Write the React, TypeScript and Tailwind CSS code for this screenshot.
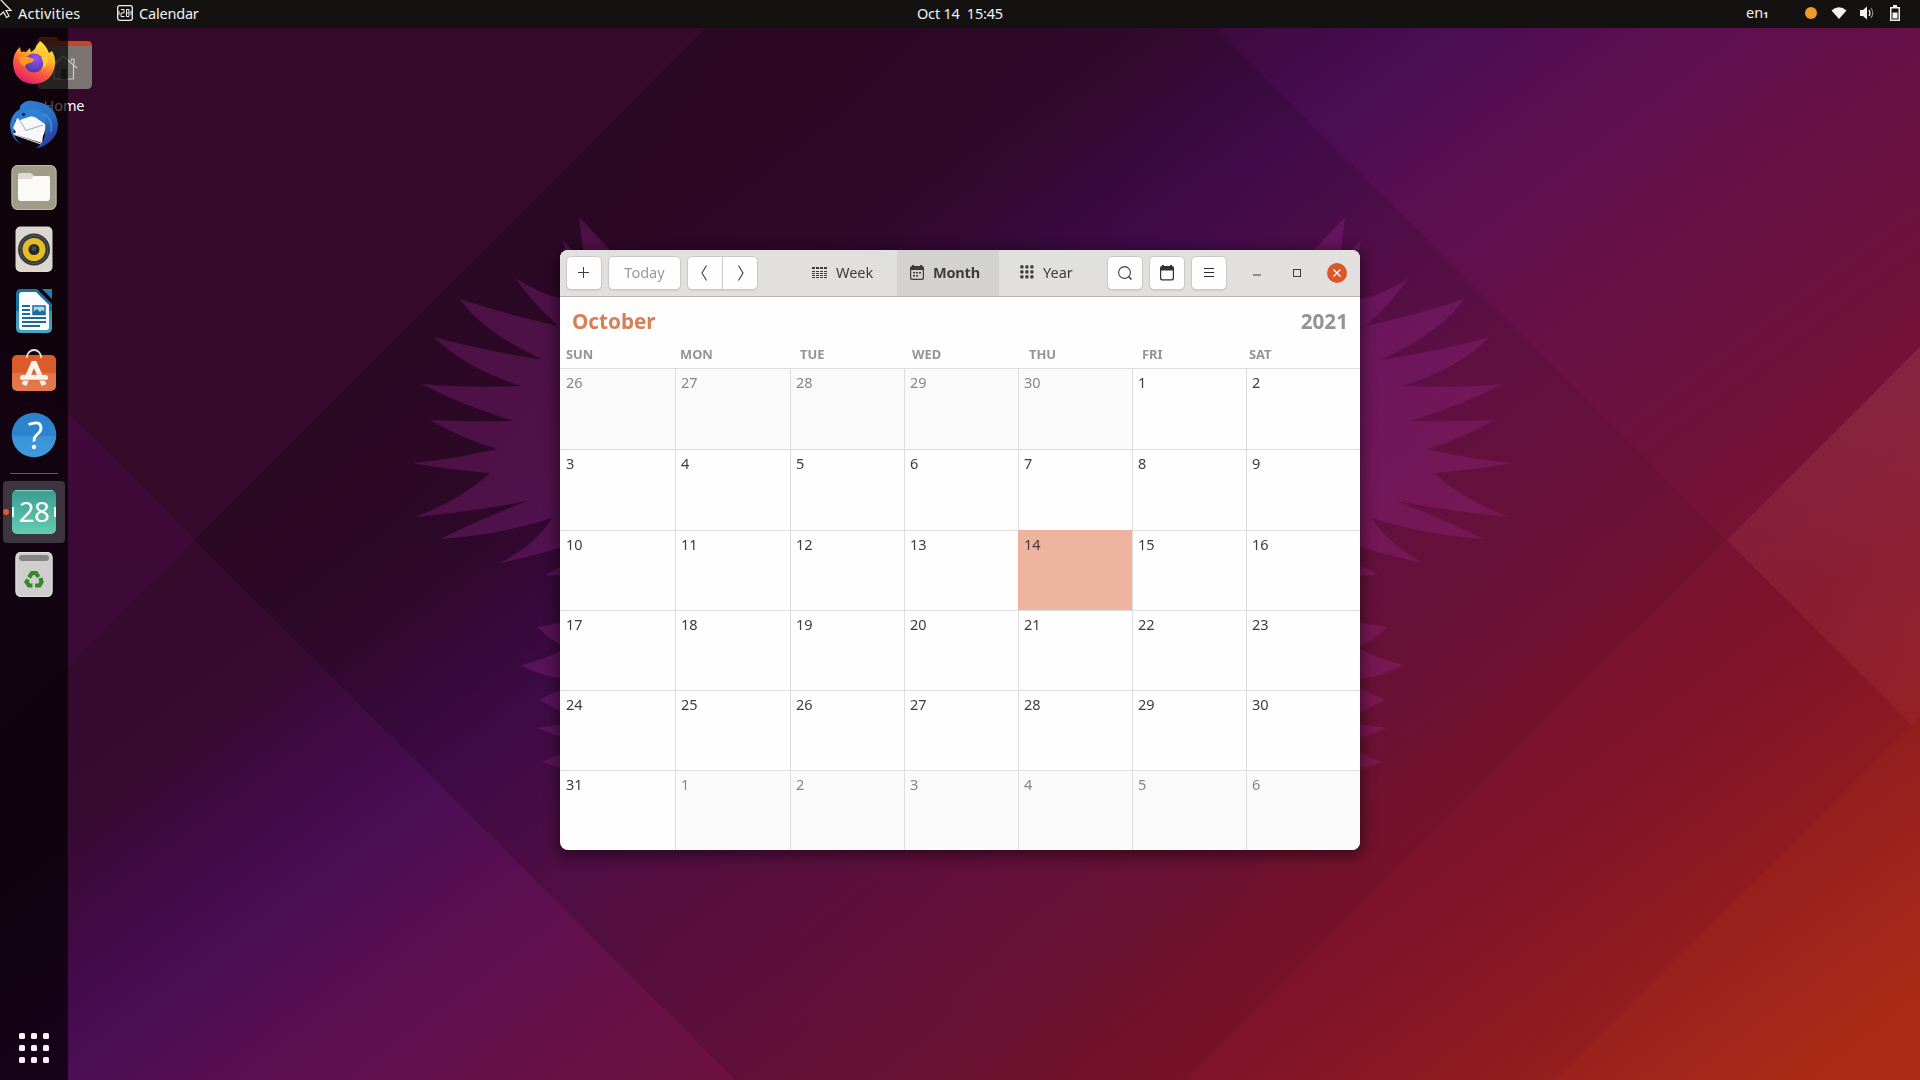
import React from "react";

const FONT = "font-['Noto_Sans','Open_Sans',sans-serif]";

const CROWN =
  "M610 250 L579 217 L583 250 Z M563 240 L574 252 L566 254 Z " +
  "M566 327 L558 326 Q535 305 515 278 Q540 294 566 300 Z " +
  "M566 328 Q505 314 460 299 Q480 330 543 360 Q485 351 434 337 Q465 368 521 386 Q465 388 422 384 Q460 404 513 421 Q470 422 430 420 Q460 438 497 449 Q450 460 412 463 Q450 470 490 473 Q460 500 415 517 Q470 512 528 501 Q490 515 440 539 Q500 535 552 518 Q535 545 500 563 Q535 556 566 546 Z " +
  "M545 575 L566 564 V576 Z M566 622 L537 627 Q548 638 566 648 Z M566 648 Q545 660 520 665 Q540 676 566 679 Z " +
  "M566 687 L539 700 L566 714 Z M566 724 L537 728 L566 739 Z M566 752 L542 762 L566 770 Z";

function Wallpaper() {
  return (
    <svg className="absolute inset-0" width="1920" height="1080" viewBox="0 0 1920 1080">
      <defs>
        <linearGradient id="wall" gradientUnits="userSpaceOnUse" x1="0" y1="0" x2="1170" y2="1564">
          <stop offset="0" stopColor="#360a2c" />
          <stop offset="0.25" stopColor="#350a2b" />
          <stop offset="0.36" stopColor="#370a32" />
          <stop offset="0.42" stopColor="#420b48" />
          <stop offset="0.455" stopColor="#4a0d53" />
          <stop offset="0.52" stopColor="#5a0f50" />
          <stop offset="0.62" stopColor="#691146" />
          <stop offset="0.7" stopColor="#70123a" />
          <stop offset="0.8" stopColor="#7d132a" />
          <stop offset="0.88" stopColor="#8d1921" />
          <stop offset="1" stopColor="#a62a18" />
        </linearGradient>
        <linearGradient id="diamond" gradientUnits="userSpaceOnUse" x1="450" y1="280" x2="1400" y2="900">
          <stop offset="0" stopColor="#000" stopOpacity="0.19" />
          <stop offset="0.6" stopColor="#000" stopOpacity="0.12" />
          <stop offset="1" stopColor="#000" stopOpacity="0.04" />
        </linearGradient>
        <linearGradient id="tri" x1="0" y1="0" x2="0" y2="1">
          <stop offset="0" stopColor="#470a42" stopOpacity="0.7" />
          <stop offset="1" stopColor="#3c0a3a" stopOpacity="0.6" />
        </linearGradient>
        <linearGradient id="square" gradientUnits="userSpaceOnUse" x1="1820" y1="400" x2="1750" y2="1000">
          <stop offset="0" stopColor="#ffa0a0" stopOpacity="0.12" />
          <stop offset="1" stopColor="#ff6040" stopOpacity="0.03" />
        </linearGradient>
      </defs>
      <rect width="1920" height="1080" fill="url(#wall)" />
      <path d="M706 28 L195 540 L735 1080 H1185 L1727 540 L1215 28 Z" fill="url(#diamond)" />
      <path d="M0 345 L195 540 L0 735 Z" fill="url(#tri)" />
      <path d="M1727 540 L1920 347 V716 L1911 724 Z" fill="url(#square)" />
      <path d="M1911 724 L1920 715 V1080 H1555 Z" fill="#ff5a10" opacity="0.05" />
      <g fill="#9e2a94" opacity="0.3">
        <path d={CROWN} />
        <path d={CROWN} transform="translate(1924 0) scale(-1 1)" />
      </g>
    </svg>
  );
}

function HomeIcon() {
  return (
    <div className="absolute left-[37px] top-[37px] w-[55px]">
      <svg width="55" height="52" viewBox="0 0 55 52" className="block">
        <path d="M0 5 Q0 0 4 0 H17 Q20 0 22 4 H51 Q55 4 55 9 V30 H0 Z" fill="#c4472a" />
        <path d="M0 9 H55 V47 Q55 52 50 52 H5 Q0 52 0 47 Z" fill="#7a7573" />
        <g fill="none" stroke="#cfcaca" strokeWidth="1.2">
          <path d="M14 31 L26 19 L40 31 M17 28 V42 H36.500 V27 M34.500 24 V22 H37 V27" />
        </g>
        <path d="M24 42 V32 H30 V42 Z" fill="#4a4545" />
      </svg>
      <div className="mt-[6px] w-[54px] text-center text-[14.500px] leading-5 tracking-[-0.1px] text-white">Home</div>
    </div>
  );
}

function Slot({ children }: { children: React.ReactNode }) {
  return (
    <svg width="62" height="62" viewBox="0 0 62 62" className="block shrink-0">
      {children}
    </svg>
  );
}

function Dock() {
  return (
    <aside className="relative flex w-[68px] flex-col items-center bg-black/70 pt-1">
      <Slot>
        <defs>
          <linearGradient id="ff" x1="0.8" y1="0" x2="0.3" y2="1">
            <stop offset="0" stopColor="#fff04a" />
            <stop offset="0.35" stopColor="#ffb628" />
            <stop offset="0.65" stopColor="#ff5a3c" />
            <stop offset="1" stopColor="#e01a70" />
          </linearGradient>
          <radialGradient id="ffg" cx="0.6" cy="0.25" r="0.8">
            <stop offset="0" stopColor="#9a52f0" />
            <stop offset="1" stopColor="#4b38a5" />
          </radialGradient>
        </defs>
        <path d="M37 9 Q43 13 46 21 L49 19 Q53 26 52 33 Q49 51 31 52 Q11 51 10 31 Q10 21 17 15 L18 20 Q20 19 23 20 L27 16 L28 20 Q33 17 33 14 Q35 12 37 9 Z" fill="url(#ff)" />
        <circle cx="31" cy="31" r="9.500" fill="url(#ffg)" />
        <path d="M16 25 Q22 23 31 27 Q31 30 26 31 Q22 32 22 35 Q16 32 16 25 Z" fill="#ff9a22" />
        <path d="M29 21 Q37 19 41 26 L38 25 Q42 32 39 37 Q46 33 45 25 Q42 16 34 17 Z" fill="#ffc93a" />
      </Slot>
      <Slot>
        <defs>
          <linearGradient id="tb" x1="0" y1="0" x2="1" y2="1">
            <stop offset="0" stopColor="#3484dc" />
            <stop offset="0.6" stopColor="#2a70c0" />
            <stop offset="1" stopColor="#2a2090" />
          </linearGradient>
        </defs>
        <path d="M17 12 Q22 6 30 7 Q50 9 54 25 Q58 40 44 50 Q38 54 33 54 Q43 48 42 36 L20 16 Q9 26 11 41 Q14 48 20 51 Q8 46 7 31 Q8 20 17 15 Z" fill="url(#tb)" />
        <path d="M14 24 Q22 20 32 23 L42 30 Q43 36 40 42 L39 49 L10 40 L13 38 L10 34 Z" fill="#f6f8fb" />
        <path d="M11 40.500 L38 50" stroke="#d9dde3" strokeWidth="1.200" />
        <path d="M16 25 L23 36.500 L40 31" fill="none" stroke="#a0a8b2" strokeWidth="1" />
        <path d="M15 21 Q22 10 36 16 Q44 22 42 30 Q36 23 29 22 Q19 25 17 26 Q14 25 15 21 Z" fill="#2f7fd2" />
        <path d="M40 20 Q50 24 48 38" fill="none" stroke="#4aa3e6" strokeWidth="2" opacity="0.6" />
        <circle cx="20.500" cy="20.500" r="1.800" fill="#0c2f5c" />
      </Slot>
      <Slot>
        <rect x="8.500" y="9" width="45" height="45" rx="6" fill="#a19c88" />
        <rect x="9" y="9.500" width="44" height="44" rx="6" fill="none" stroke="#bdb8a6" />
        <path d="M15 19 Q15 17 17 17 H27 Q29 17 31 20 H45 Q47 20 47 22 V28 H15 Z" fill="#dfdbd0" />
        <path d="M15 23 H28 L31 20 H45 Q47 20 47 22 V42 Q47 45 44 45 H18 Q15 45 15 42 Z" fill="#fbfaf6" />
      </Slot>
      <Slot>
        <rect x="12.500" y="8.500" width="37" height="45.500" rx="5" fill="#dcd8d0" />
        <circle cx="31" cy="31.500" r="16" fill="#33383b" />
        <circle cx="31" cy="31.500" r="14" fill="none" stroke="#5c6164" strokeWidth="0.800" />
        <circle cx="31" cy="31.500" r="11.500" fill="#e6bd25" />
        <circle cx="31" cy="31.500" r="5.500" fill="#23282a" />
        <circle cx="31" cy="30.500" r="2.500" fill="#454a4d" />
      </Slot>
      <Slot>
        <defs>
          <linearGradient id="wr" x1="0" y1="0" x2="0" y2="1">
            <stop offset="0.500" stopColor="#1b709f" />
            <stop offset="0.500" stopColor="#3a93bb" />
            <stop offset="1" stopColor="#4ba3c4" />
          </linearGradient>
        </defs>
        <path d="M18 9 H34 L49 24 V48 Q49 53 44 53 H18 Q13 53 13 48 V14 Q13 9 18 9 Z" fill="url(#wr)" />
        <path d="M39 9 H49 V19 Z" fill="#2480ac" />
        <path d="M19 12 H33 L46 25 V47 Q46 50 43 50 H19 Q16 50 16 47 V15 Q16 12 19 12 Z" fill="#fafcfd" />
        <path d="M19 26 H27 M19 30 H27 M19 34 H27 M19 38 H43 M19 42 H43 M19 46 H37" stroke="#1e6a96" strokeWidth="2" />
        <rect x="30" y="26" width="12" height="8.500" fill="#a9d8f0" stroke="#1e6a96" strokeWidth="1.500" />
        <path d="M30 34 V32 L34 29 L37 32 L39 30 L42 32 V34 Z" fill="#1e6a96" />
      </Slot>
      <Slot>
        <defs>
          <linearGradient id="sw" x1="0" y1="0" x2="0" y2="1">
            <stop offset="0.500" stopColor="#dc5b2a" />
            <stop offset="0.500" stopColor="#e17446" />
            <stop offset="1" stopColor="#e37a4e" />
          </linearGradient>
        </defs>
        <rect x="9" y="13" width="44" height="36" rx="5" fill="url(#sw)" />
        <path d="M24 16 V15 A7 7 0 0 1 38 15 V16" fill="none" stroke="#f3dfc6" strokeWidth="1.800" />
        <path d="M21 43 L31 20 L41 43" fill="none" stroke="#faf3ec" strokeWidth="5" strokeLinejoin="bevel" />
        <path d="M19.500 35.500 H42.500" stroke="#faf3ec" strokeWidth="5" strokeLinecap="round" />
        <path d="M20 38.200 H42" stroke="#d9683c" strokeWidth="0.800" />
      </Slot>
      <Slot>
        <defs>
          <linearGradient id="hp" x1="0" y1="0" x2="0" y2="1">
            <stop offset="0.530" stopColor="#2b84cd" />
            <stop offset="0.530" stopColor="#3b92d6" />
            <stop offset="1" stopColor="#419add" />
          </linearGradient>
        </defs>
        <circle cx="31" cy="31" r="22.300" fill="url(#hp)" />
        <path d="M25.500 20.500 Q38 16 38 24 Q38 27.500 34 30.500 Q30.500 33.500 31 37.500" fill="none" stroke="#fff" strokeWidth="2.800" />
        <circle cx="31" cy="43" r="2.200" fill="#fff" />
      </Slot>
      <div className="my-[7px] h-px w-12 shrink-0 bg-[#665b66]" />
      <div className="relative h-[62px] w-[62px] shrink-0 rounded-[4px] bg-[#3d353f]">
        <Slot>
          <defs>
            <linearGradient id="cal" x1="0" y1="0" x2="0" y2="1">
              <stop offset="0" stopColor="#3b9c91" />
              <stop offset="1" stopColor="#63cdb2" />
            </linearGradient>
          </defs>
          <rect x="9" y="9" width="44" height="44" rx="5" fill="url(#cal)" />
          <path d="M12 9.700 H50" stroke="#8fd6cb" strokeWidth="1" />
          <path d="M10 26 V36 M52 26 V36" stroke="#e9fbf6" strokeWidth="2" />
          <circle cx="3" cy="31" r="3" fill="#e25a2b" />
        </Slot>
        <span className="absolute inset-0 text-center font-['Noto_Sans',sans-serif] text-[27.500px] leading-[61px] tracking-[-0.5px] text-white">28</span>
      </div>
      <Slot>
        <rect x="12.500" y="9" width="37" height="45" rx="5" fill="#cfcecd" />
        <rect x="13" y="9.500" width="36" height="44" rx="5" fill="none" stroke="#e2e1e0" />
        <rect x="16" y="12" width="30" height="6" rx="3" fill="#848484" />
        <g fill="none" stroke="#34882a" strokeWidth="4.200">
          <path d="M26 34.500 L29 30 H33 L35.500 34" />
          <path d="M37.500 35 L38.500 39 L36.500 42.500 H32" />
          <path d="M29.500 42.500 H26 L23.500 39 L25 36.500" />
        </g>
      </Slot>
      <svg width="30" height="30" viewBox="0 0 30 30" className="mb-[17px] mt-auto block shrink-0" fill="#fdf0fb">
        {[0, 12, 24].map((y) => [0, 12, 24].map((x) => <rect key={x + "-" + y} x={x} y={y} width="6" height="6" rx="1.500" />))}
      </svg>
    </aside>
  );
}

function TopBar() {
  return (
    <header className="relative flex h-7 items-center bg-[#131211] pb-[2px] text-[14.500px] leading-[26px] text-[#f2f2f2]">
      <svg className="absolute left-0 top-0" width="14" height="20" viewBox="0 0 14 20">
        <path d="M0 -1 L11 10.500 H6 L9 16 L6.500 17.500 L3.500 12 L0 15" fill="#0d0d0d" stroke="#f4f4f4" strokeWidth="1.200" />
      </svg>
      <span className="ml-[18px] w-[99px] tracking-[0.2px]">Activities</span>
      <svg width="16" height="16" viewBox="0 0 16 16" className="mr-[6px]" fill="none" stroke="#f2f2f2">
        <rect x="0.700" y="0.700" width="14.600" height="14.600" rx="2" strokeWidth="1.300" />
        <path d="M4 4.500 H7 V8 H4 V11.500 H7.500 M9.500 4.500 H12 V11.500 H9.500 Z M9.500 8 H12 M2 6 V10 M14 6 V10" strokeWidth="1" />
      </svg>
      <span className="tracking-[-0.2px]">Calendar</span>
      <span className="absolute left-[917px] whitespace-pre tracking-[-0.2px]">Oct 14  15:45</span>
      <div className="ml-auto flex items-center">
        <span className="w-[59px]">
          en<span className="text-[9px] font-bold">1</span>
        </span>
        <span className="h-3 w-3 rounded-full bg-[#f09c29]" />
        <svg className="ml-[14px]" width="16" height="12" viewBox="0 0 16 12">
          <path d="M0.500 3.500 Q8 -3 15.500 3.500 L8 12 Z" fill="#f2f2f2" />
        </svg>
        <svg className="ml-[12px]" width="16" height="14" viewBox="0 0 16 14">
          <path d="M1 4 H4 L8 0.500 V13.500 L4 10 H1 Z" fill="#f2f2f2" />
          <path d="M10 4 Q12 7 10 10" fill="none" stroke="#f2f2f2" strokeWidth="1.300" />
          <path d="M12 2 Q15.500 7 12 12" fill="none" stroke="#8a8a8a" strokeWidth="1.200" />
        </svg>
        <svg className="ml-[15px] mr-[20px]" width="10" height="16" viewBox="0 0 10 16">
          <path d="M3 0 H7 V2 H10 V16 H0 V2 H3 Z M1.500 3.500 V14.500 H8.500 V3.500 Z" fill="#f2f2f2" fillRule="evenodd" />
          <rect x="2.500" y="7.500" width="5" height="6" fill="#f2f2f2" />
        </svg>
      </div>
    </header>
  );
}

const BTN = "flex h-[34px] items-center justify-center border border-[#cbc9c7] bg-[#fefefe] shadow-[0_1px_1px_rgba(0,0,0,0.08)]";

function TitleBar() {
  return (
    <div className="flex h-[47px] items-center border-b border-[#b9b8b7] bg-[#e1e0df] pl-[6px] text-[14.500px] text-[#3d3d3d]">
      <button className={`${BTN} w-9 rounded-[5px]`}>
        <svg width="12" height="12" viewBox="0 0 12 12">
          <path d="M5.500 0 V11 M0 5.500 H11" stroke="#3d3d3d" />
        </svg>
      </button>
      <button className={`${BTN} ml-[6px] w-[73px] rounded-[5px] text-[#9a9a9a]`}>Today</button>
      <button className={`${BTN} ml-[6px] w-9 rounded-l-[5px]`}>
        <svg width="8" height="16" viewBox="0 0 8 16" fill="none" stroke="#3d3d3d" strokeWidth="1.100">
          <path d="M5.500 0.500 L1 8 L5.500 15.500" />
        </svg>
      </button>
      <button className={`${BTN} -ml-px w-9 rounded-r-[5px]`}>
        <svg width="8" height="16" viewBox="0 0 8 16" fill="none" stroke="#3d3d3d" strokeWidth="1.100">
          <path d="M2.500 0.500 L7 8 L2.500 15.500" />
        </svg>
      </button>
      <div className="ml-[37px] flex h-full">
        <div className="flex w-[102px] items-center pl-[17px]">
          <svg width="15" height="12" viewBox="0 0 15 12" className="mb-px" fill="#3d3d3d">
            {[0, 4, 8, 12].map((x) => (
              <g key={x}>
                <rect x={x} y="0" width="3" height="2" />
                <rect x={x} y="4" width="3" height="1" />
                <rect x={x} y="6" width="3" height="1" />
                <rect x={x} y="8" width="3" height="1" />
                <rect x={x} y="10" width="3" height="1" />
              </g>
            ))}
          </svg>
          <span className="ml-[9px]">Week</span>
        </div>
        <div className="flex w-[102px] items-center bg-[#d3d2d1] pl-[13px]">
          <svg width="14" height="15" viewBox="0 0 14 15" className="mb-[2px]">
            <path d="M2 0 H4 V1 H10 V0 H12 V1 Q14 1 14 3 V13 Q14 15 12 15 H2 Q0 15 0 13 V3 Q0 1 2 1 Z M1.200 5 V12.500 Q1.200 13.800 2.500 13.800 H11.500 Q12.800 13.800 12.800 12.500 V5 Z" fill="#3d3d3d" fillRule="evenodd" />
            <path d="M6 7 h2 v1.500 h-2 z M9 7 h2 v1.500 h-2 z M3 10 h2 v1.500 h-2 z M6 10 h2 v1.500 h-2 z M3 7 h2 v1.500 h-2 z" fill="#3d3d3d" />
          </svg>
          <span className="ml-[9px] font-bold tracking-[-0.2px]">Month</span>
        </div>
        <div className="flex w-[101px] items-center pl-[21px]">
          <svg width="14" height="14" viewBox="0 0 14 14" className="mb-[2px]" fill="#3d3d3d">
            {[0, 5, 10].map((y) => [0, 5, 10].map((x) => <rect key={x + "-" + y} x={x + 0.3} y={y + 0.3} width="3.200" height="3.200" rx="0.800" />))}
          </svg>
          <span className="ml-[9px]">Year</span>
        </div>
      </div>
      <div className="ml-[7px] flex gap-[6px]">
        <button className={`${BTN} w-9 rounded-[5px]`}>
          <svg width="14" height="14" viewBox="0 0 14 14" fill="none" stroke="#3d3d3d" strokeWidth="1.100" className="mr-px">
            <circle cx="6.500" cy="6.500" r="5.900" />
            <path d="M10.700 10.700 L13.500 13.500" strokeWidth="1.500" />
          </svg>
        </button>
        <button className={`${BTN} w-9 rounded-[5px]`}>
          <svg width="14" height="16" viewBox="0 0 14 16">
            <path d="M2 0 H4 V1 H10 V0 H12 V1 Q14 1 14 3 V13 Q14 15.500 12 15.500 H2 Q0 15.500 0 13 V3 Q0 1 2 1 Z M1.200 5.500 V12.500 Q1.200 14.300 2.500 14.300 H11.500 Q12.800 14.300 12.800 12.500 V5.500 Z" fill="#333" fillRule="evenodd" />
          </svg>
        </button>
        <button className={`${BTN} w-9 rounded-[5px]`}>
          <svg width="10" height="10" viewBox="0 0 10 10">
            <path d="M0 0.500 H10 M0 4.500 H10 M0 8.500 H10" stroke="#2d2d2d" />
          </svg>
        </button>
      </div>
      <svg className="ml-[26px] mt-1" width="8" height="2" viewBox="0 0 8 2">
        <path d="M0 1 H8" stroke="#3d3d3d" strokeWidth="1.200" />
      </svg>
      <span className="ml-[32px] h-2 w-2 border border-[#3d3d3d]" />
      <span className="ml-[26px] flex h-5 w-5 items-center justify-center rounded-full bg-[#db5728]">
        <svg width="8" height="8" viewBox="0 0 8 8">
          <path d="M0.500 0.500 L7.500 7.500 M7.500 0.500 L0.500 7.500" stroke="#fff" strokeWidth="1.300" />
        </svg>
      </span>
    </div>
  );
}

const DAYS = Array.from({ length: 42 }, (_, i) => {
  if (i < 5) return { n: 26 + i, dim: true };
  if (i < 36) return { n: i - 4, dim: false };
  return { n: i - 35, dim: true };
});

const COLS = "grid grid-cols-[115px_115px_114px_114px_114px_114px_114px]";

function CalendarWindow() {
  return (
    <main className="absolute left-[560px] top-[250px] flex h-[600px] w-[800px] flex-col overflow-hidden rounded-lg bg-[#fefefe] shadow-[0_3px_14px_3px_rgba(0,0,0,0.45)]">
      <TitleBar />
      <div className="flex h-[48px] items-center justify-between pl-[12px] pr-[12px] pt-[2px] text-[20.700px] font-bold">
        <span className="text-[#d97f58]">October</span>
        <span className="text-[#949494]">2021</span>
      </div>
      <div className={`${COLS} h-[23px] text-[12.900px] font-bold leading-[18px] text-[#949494]`}>
        <span className="pl-[6px]">SUN</span>
        <span className="pl-[5px]">MON</span>
        <span className="pl-[10px]">TUE</span>
        <span className="pl-[8px]">WED</span>
        <span className="pl-[11px]">THU</span>
        <span className="pl-[10px]">FRI</span>
        <span className="pl-[3px]">SAT</span>
      </div>
      <div className={`${COLS} flex-1 grid-rows-[81px_81px_80px_80px_80px_80px] text-[14.500px] leading-[18px] tracking-[-0.1px]`}>
        {DAYS.map((d, i) => (
          <div
            key={i}
            className={`border-t pt-[4px] ${i % 7 ? "border-l pl-[5px]" : "pl-[6px]"} ${
              i === 18
                ? "border-[#edb49f] bg-[#edb49f] text-[#4a3a3a]"
                : d.dim
                  ? "border-[#dededd] bg-[#fafafa] text-[#84878a]"
                  : "border-[#dededd] text-[#3d3d3d]"
            }`}
          >
            {d.n}
          </div>
        ))}
      </div>
    </main>
  );
}

export default function App() {
  return (
    <div className={`relative flex h-[1080px] w-[1920px] flex-col overflow-hidden bg-[#350a2b] ${FONT}`}>
      <Wallpaper />
      <HomeIcon />
      <TopBar />
      <div className="flex min-h-0 flex-1">
        <Dock />
      </div>
      <CalendarWindow />
    </div>
  );
}
